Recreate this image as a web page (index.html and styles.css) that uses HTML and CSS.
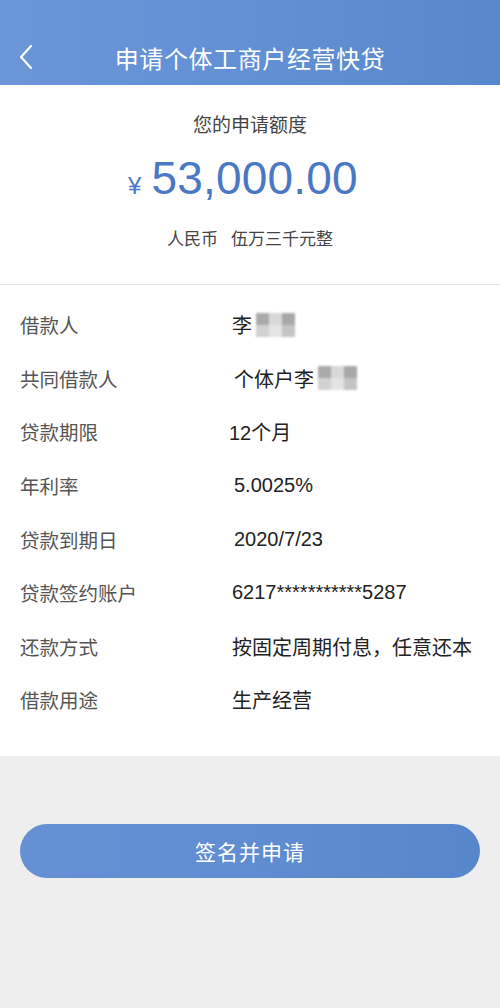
FILE: index.html
```html
<!DOCTYPE html>
<html lang="zh">
<head>
<meta charset="utf-8">
<link rel="stylesheet" href="styles.css">
</head>
<body>
<div class="page">
  <header class="topbar">
    <svg class="back" width="16" height="26" viewBox="0 0 16 26"><polyline points="13,2 3,13 13,24" fill="none" stroke="#fff" stroke-width="2.2" stroke-linecap="round" stroke-linejoin="round"/></svg>
    <h1 class="title">申请个体工商户经营快贷</h1>
  </header>

  <section class="amount">
    <div class="amount-label">您的申请额度</div>
    <div class="amount-value"><span class="yen">¥</span><span class="num">53,000.00</span></div>
    <div class="amount-words"><span>人民币</span><span>伍万三千元整</span></div>
  </section>

  <section class="details">
    <div class="row"><span class="label">借款人</span><span class="value">李<span class="blur"><i class="b1"></i><i class="b2"></i><i class="b3"></i><i class="b4"></i><i class="b5"></i><i class="b6"></i></span></span></div>
    <div class="row"><span class="label">共同借款人</span><span class="value shift2">个体户李<span class="blur"><i class="b1"></i><i class="b2"></i><i class="b3"></i><i class="b4"></i><i class="b5"></i><i class="b6"></i></span></span></div>
    <div class="row"><span class="label">贷款期限</span><span class="value shiftm">12个月</span></div>
    <div class="row"><span class="label">年利率</span><span class="value shift2">5.0025%</span></div>
    <div class="row"><span class="label">贷款到期日</span><span class="value shift2">2020/7/23</span></div>
    <div class="row"><span class="label">贷款签约账户</span><span class="value">6217***********5287</span></div>
    <div class="row"><span class="label">还款方式</span><span class="value">按固定周期付息，任意还本</span></div>
    <div class="row"><span class="label">借款用途</span><span class="value">生产经营</span></div>
  </section>

  <section class="footer">
    <button class="submit">签名并申请</button>
  </section>
</div>
</body>
</html>
```

FILE: styles.css
```css
* { box-sizing: border-box; }
html, body { margin: 0; padding: 0; }
body {
  width: 500px;
  height: 1008px;
  overflow: hidden;
  background: #eeeeee;
  font-family: "Liberation Sans", "Noto Sans CJK SC", sans-serif;
}
.page { display: flex; flex-direction: column; height: 1008px; }

.topbar {
  height: 85px;
  padding-top: 30px;
  background: linear-gradient(90deg, #6b96d8 0%, #6290d5 50%, #5787cc 100%);
  display: flex;
  align-items: center;
  justify-content: center;
  position: relative;
}
.back { position: absolute; left: 18px; top: 44px; }
.title {
  margin: 0;
  font-size: 24px;
  font-weight: 400;
  letter-spacing: 0.6px;
  color: #fff;
  font-family: "Noto Sans CJK SC", sans-serif;
}

.amount {
  background: #fff;
  height: 200px;
  border-bottom: 1px solid #e6e6e6;
  display: flex;
  flex-direction: column;
  align-items: center;
  padding-top: 26px;
}
.amount-label {
  font-size: 19px;
  color: #444;
  line-height: 26px;
  font-family: "Noto Sans CJK SC", sans-serif;
}
.amount-value {
  display: flex;
  align-items: baseline;
  color: #4a78c4;
  margin-top: 13px;
  margin-right: 14px;
  height: 56px;
  line-height: 56px;
}
.yen { font-size: 24px; margin-right: 10px; }
.num { font-size: 46px; letter-spacing: 0.2px; }
.amount-words {
  margin-top: 20px;
  display: flex;
  gap: 13px;
  font-size: 17px;
  color: #444;
  line-height: 24px;
  font-family: "Noto Sans CJK SC", sans-serif;
}

.details {
  background: #fff;
  padding: 13px 0 29px 0;
  display: flex;
  flex-direction: column;
}
.row {
  height: 53.6px;
  display: flex;
  align-items: center;
  font-size: 19.5px;
}
.label {
  width: 232px;
  padding-left: 20px;
  color: #555;
  font-family: "Noto Sans CJK SC", sans-serif;
}
.value {
  color: #222;
  display: flex;
  align-items: center;
  font-size: 20px;
  font-family: "Liberation Sans", "Noto Sans CJK SC", sans-serif;
}
.shift2 { margin-left: 2px; }
.shiftm { margin-left: -3px; }

.blur {
  display: inline-grid;
  grid-template-columns: repeat(3, 13px);
  grid-template-rows: repeat(2, 12px);
  margin-left: 4px;
  filter: blur(1.2px);
}
.blur i { display: block; }
.b1 { background: #aaaaaa; }
.b2 { background: #d8d8d8; }
.b3 { background: #a8a8a8; }
.b4 { background: #d2d2d2; }
.b5 { background: #e4e4e4; }
.b6 { background: #c4c4c4; }

.footer {
  flex: 1;
  background: #eeeeee;
  padding: 68px 20px 0 20px;
}
.submit {
  width: 100%;
  height: 54px;
  border: none;
  border-radius: 27px;
  background: linear-gradient(90deg, #6690d4 0%, #608dd2 50%, #5686cb 100%);
  color: #fff;
  font-size: 21px;
  letter-spacing: 1px;
  font-family: "Noto Sans CJK SC", sans-serif;
  padding: 0;
}
```
